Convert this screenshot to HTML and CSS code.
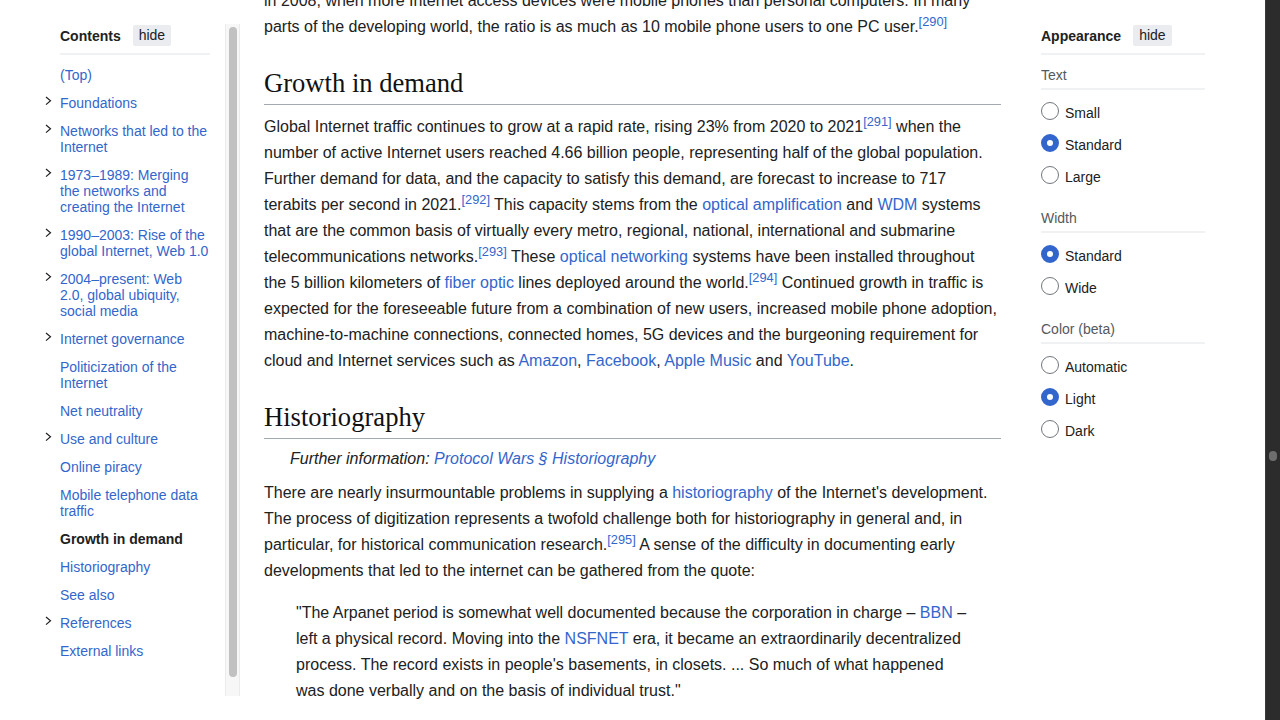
FILE: index.html
```html
<!DOCTYPE html>
<html lang="en">
<head>
<meta charset="utf-8">
<title>Internet – Growth in demand</title>
<link rel="stylesheet" href="styles.css">
</head>
<body>
<div class="page">
  <aside class="toc-col">
    <nav class="toc">
      <div class="pin-head"><span class="pin-title">Contents</span><button class="hide-btn">hide</button></div>
      <ul class="toc-list">
        <li class="toc-item"><a href="#">(Top)</a></li>
        <li class="toc-item"><span class="chev"><svg width="20" height="16" viewBox="0 0 20 16"><path d="M6 2 L10.5 5.8 L6 9.6" fill="none" stroke="#202122" stroke-width="1.2"/></svg></span><a href="#">Foundations</a></li>
        <li class="toc-item"><span class="chev"><svg width="20" height="16" viewBox="0 0 20 16"><path d="M6 2 L10.5 5.8 L6 9.6" fill="none" stroke="#202122" stroke-width="1.2"/></svg></span><a href="#">Networks that led to the<br>Internet</a></li>
        <li class="toc-item"><span class="chev"><svg width="20" height="16" viewBox="0 0 20 16"><path d="M6 2 L10.5 5.8 L6 9.6" fill="none" stroke="#202122" stroke-width="1.2"/></svg></span><a href="#">1973–1989: Merging<br>the networks and<br>creating the Internet</a></li>
        <li class="toc-item"><span class="chev"><svg width="20" height="16" viewBox="0 0 20 16"><path d="M6 2 L10.5 5.8 L6 9.6" fill="none" stroke="#202122" stroke-width="1.2"/></svg></span><a href="#">1990–2003: Rise of the<br>global Internet, Web 1.0</a></li>
        <li class="toc-item"><span class="chev"><svg width="20" height="16" viewBox="0 0 20 16"><path d="M6 2 L10.5 5.8 L6 9.6" fill="none" stroke="#202122" stroke-width="1.2"/></svg></span><a href="#">2004–present: Web<br>2.0, global ubiquity,<br>social media</a></li>
        <li class="toc-item"><span class="chev"><svg width="20" height="16" viewBox="0 0 20 16"><path d="M6 2 L10.5 5.8 L6 9.6" fill="none" stroke="#202122" stroke-width="1.2"/></svg></span><a href="#">Internet governance</a></li>
        <li class="toc-item"><a href="#">Politicization of the<br>Internet</a></li>
        <li class="toc-item"><a href="#">Net neutrality</a></li>
        <li class="toc-item"><span class="chev"><svg width="20" height="16" viewBox="0 0 20 16"><path d="M6 2 L10.5 5.8 L6 9.6" fill="none" stroke="#202122" stroke-width="1.2"/></svg></span><a href="#">Use and culture</a></li>
        <li class="toc-item"><a href="#">Online piracy</a></li>
        <li class="toc-item"><a href="#">Mobile telephone data<br>traffic</a></li>
        <li class="toc-item toc-current"><a href="#">Growth in demand</a></li>
        <li class="toc-item"><a href="#">Historiography</a></li>
        <li class="toc-item"><a href="#">See also</a></li>
        <li class="toc-item"><span class="chev"><svg width="20" height="16" viewBox="0 0 20 16"><path d="M6 2 L10.5 5.8 L6 9.6" fill="none" stroke="#202122" stroke-width="1.2"/></svg></span><a href="#">References</a></li>
        <li class="toc-item"><a href="#">External links</a></li>
      </ul>
    </nav>
    <div class="toc-scroll"><div class="toc-thumb"></div></div>
  </aside>

  <main class="content">
    <p class="cont-para">in 2008, when more Internet access devices were mobile phones than personal computers. In many parts of the developing world, the ratio is as much as 10 mobile phone users to one PC user.<sup class="ref"><a href="#">[290]</a></sup></p>

    <h2 class="sec-head">Growth in demand</h2>
    <p class="para">Global Internet traffic continues to grow at a rapid rate, rising 23% from 2020 to 2021<sup class="ref"><a href="#">[291]</a></sup> when the number of active Internet users reached 4.66 billion people, representing half of the global population. Further demand for data, and the capacity to satisfy this demand, are forecast to increase to 717 terabits per second in 2021.<sup class="ref"><a href="#">[292]</a></sup> This capacity stems from the <a href="#">optical amplification</a> and <a href="#">WDM</a> systems that are the common basis of virtually every metro, regional, national, international and submarine telecommunications networks.<sup class="ref"><a href="#">[293]</a></sup> These <a href="#">optical networking</a> systems have been installed throughout the 5 billion kilometers of <a href="#">fiber optic</a> lines deployed around the world.<sup class="ref"><a href="#">[294]</a></sup> Continued growth in traffic is expected for the foreseeable future from a combination of new users, increased mobile phone adoption, machine-to-machine connections, connected homes, 5G devices and the burgeoning requirement for cloud and Internet services such as <a href="#">Amazon</a>, <a href="#">Facebook</a>, <a href="#">Apple Music</a> and <a href="#">YouTube</a>.</p>

    <h2 class="sec-head">Historiography</h2>
    <div class="hatnote">Further information: <a href="#">Protocol Wars § Historiography</a></div>
    <p class="para">There are nearly insurmountable problems in supplying a <a href="#">historiography</a> of the Internet's development. The process of digitization represents a twofold challenge both for historiography in general and, in particular, for historical communication research.<sup class="ref"><a href="#">[295]</a></sup> A sense of the difficulty in documenting early developments that led to the internet can be gathered from the quote:</p>
    <blockquote class="quote">"The Arpanet period is somewhat well documented because the corporation in charge – <a href="#">BBN</a> – left a physical record. Moving into the <a href="#">NSFNET</a> era, it became an extraordinarily decentralized process. The record exists in people's basements, in closets. ... So much of what happened was done verbally and on the basis of individual trust."</blockquote>
  </main>

  <aside class="appearance">
    <div class="pin-head"><span class="pin-title">Appearance</span><button class="hide-btn">hide</button></div>
    <div class="app-group first">
      <div class="group-label">Text</div>
      <div class="options">
        <div class="opt"><span class="radio"></span>Small</div>
        <div class="opt"><span class="radio on"></span>Standard</div>
        <div class="opt"><span class="radio"></span>Large</div>
      </div>
    </div>
    <div class="app-group">
      <div class="group-label">Width</div>
      <div class="options">
        <div class="opt"><span class="radio on"></span>Standard</div>
        <div class="opt"><span class="radio"></span>Wide</div>
      </div>
    </div>
    <div class="app-group">
      <div class="group-label">Color (beta)</div>
      <div class="options">
        <div class="opt"><span class="radio"></span>Automatic</div>
        <div class="opt"><span class="radio on"></span>Light</div>
        <div class="opt"><span class="radio"></span>Dark</div>
      </div>
    </div>
  </aside>

  <div class="spacer"></div>
  <div class="win-scroll"><div class="win-thumb"></div></div>
</div>
</body>
</html>
```

FILE: styles.css
```css
html, body {
  margin: 0;
  padding: 0;
  height: 100%;
  overflow: hidden;
  background: #ffffff;
}

body {
  font-family: "Liberation Sans", Arial, Helvetica, sans-serif;
  color: #202122;
}

a {
  color: #3366cc;
  text-decoration: none;
}

.page {
  display: flex;
  height: 720px;
  overflow: hidden;
}

/* ---------- Table of contents ---------- */
.toc-col {
  display: flex;
  gap: 15px;
  padding: 24px 0 0 60px;
  flex: none;
  align-items: flex-start;
}

.toc {
  width: 150px;
}

.pin-head {
  display: flex;
  align-items: center;
  gap: 12px;
  padding: 1px 0 7px;
  border-bottom: 2px solid #f0f1f3;
}

.pin-title {
  font-size: 14px;
  font-weight: bold;
  line-height: 21px;
  position: relative;
  top: 1px;
}

.hide-btn {
  font-family: "Liberation Sans", Arial, sans-serif;
  font-size: 14px;
  color: #202122;
  background: #eaecf0;
  border: 0;
  border-radius: 2px;
  height: 21px;
  line-height: 21px;
  padding: 0 6px;
  margin: 0;
}

.toc-list {
  list-style: none;
  margin: 6px 0 0;
  padding: 0;
}

.toc-item {
  display: flex;
  padding: 6px 0;
  font-size: 14px;
  line-height: 16px;
  white-space: nowrap;
}

.chev {
  flex: none;
  width: 20px;
  height: 16px;
  margin-left: -20px;
}

.chev svg {
  display: block;
}

.toc-current a {
  color: #202122;
  font-weight: bold;
}

.toc-scroll {
  box-sizing: border-box;
  width: 15px;
  height: 672px;
  background: #f7f7f7;
  border-left: 1px solid #ebebeb;
  border-right: 1px solid #ebebeb;
  padding-top: 3px;
}

.toc-thumb {
  width: 8px;
  height: 650px;
  margin: 0 auto;
  background: #c1c1c1;
  border-radius: 4px;
}

/* ---------- Article ---------- */
.content {
  flex: none;
  width: 737px;
  margin-left: 24px;
  font-size: 16px;
  line-height: 26px;
}

.cont-para {
  margin: -12px 0 8px;
}

.para {
  margin: 9px 0 8px;
}

.hatnote + .para {
  margin-top: 8px;
}

.ref {
  font-size: 12.8px;
  line-height: 1;
  vertical-align: super;
}

.sec-head {
  font-family: "Liberation Serif", Georgia, "Times New Roman", serif;
  font-weight: normal;
  font-size: 26.6px;
  line-height: 36px;
  margin: 25px 0 6px;
  padding: 0 0 3px;
  border-bottom: 1px solid #a2a9b1;
  color: #101112;
}

.hatnote {
  font-style: italic;
  padding-left: 26px;
  margin: 7px 0 8px;
}

.quote {
  margin: 16px 0 0;
  padding: 0 32px;
}

/* ---------- Appearance ---------- */
.appearance {
  flex: none;
  width: 164px;
  margin-left: 40px;
  padding-top: 24px;
  font-size: 14px;
}

.app-group {
  margin-top: 17px;
}

.app-group.first {
  margin-top: 10px;
}

.group-label {
  line-height: 20px;
  color: #54595d;
  padding-bottom: 3px;
  border-bottom: 2px solid #f0f1f3;
}

.options {
  margin-top: 5px;
}

.opt {
  display: flex;
  align-items: center;
  gap: 6px;
  height: 32px;
  line-height: 20px;
  padding-top: 3px;
  box-sizing: border-box;
}

.radio {
  flex: none;
  box-sizing: border-box;
  width: 18px;
  height: 18px;
  border-radius: 50%;
  border: 1px solid #72777d;
  background: #ffffff;
  margin-top: -3px;
}

.radio.on {
  border: 6px solid #3366cc;
}

.spacer {
  flex: 1;
}

.win-scroll {
  flex: none;
  width: 15px;
  background: #2c2c2c;
  border-left: 1px solid #3a3a3a;
  box-sizing: border-box;
  padding-top: 451px;
}

.win-thumb {
  width: 8px;
  height: 10px;
  margin-left: 3px;
  border-radius: 4px;
  background: #6e6e6e;
}
```
